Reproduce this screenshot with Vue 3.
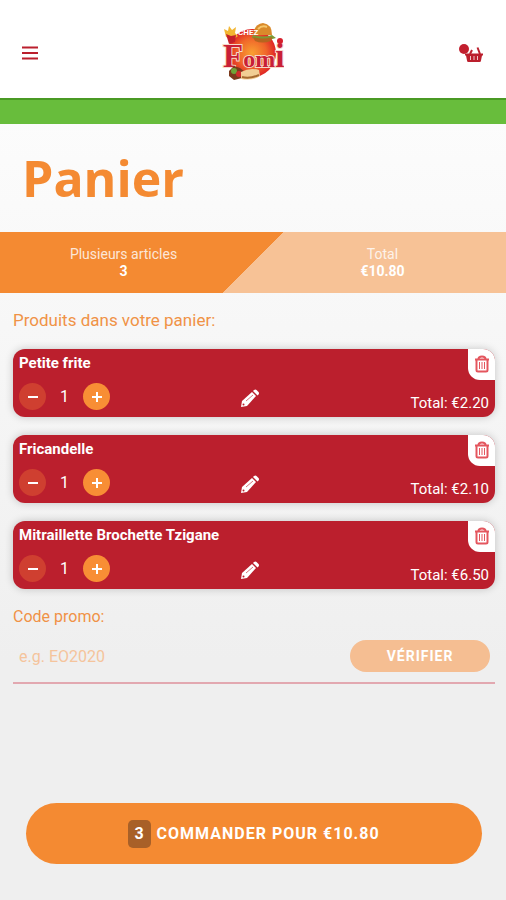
<script setup>
import { ref, computed } from 'vue'

const promoCode = ref('')

const products = ref([
  { name: 'Petite frite', price: 2.2, quantity: 1 },
  { name: 'Fricandelle', price: 2.1, quantity: 1 },
  { name: 'Mitraillette Brochette Tzigane', price: 6.5, quantity: 1 },
])

const articleCount = computed(() =>
  products.value.reduce((sum, product) => sum + product.quantity, 0)
)

const total = computed(() =>
  products.value.reduce((sum, product) => sum + product.quantity * product.price, 0)
)

const formatPrice = (value) => `€${value.toFixed(2)}`

const removeProduct = (index) => {
  products.value.splice(index, 1)
}
</script>

<template>
  <div class="cart-page">
    <header class="topbar">
      <button class="icon-button" aria-label="Menu">
        <svg width="16" height="14" viewBox="0 0 16 14">
          <path d="M0 1.5h16M0 7h16M0 12.5h16" stroke="#bb1f2d" stroke-width="2" />
        </svg>
      </button>

      <a href="#" class="logo" aria-label="Accueil">
        <svg width="62" height="60" viewBox="0 0 62 60">
          <defs>
            <radialGradient id="sun">
              <stop offset="0" stop-color="#f9a032" />
              <stop offset="0.6" stop-color="#f0662a" />
              <stop offset="1" stop-color="#df2525" />
            </radialGradient>
          </defs>
          <circle cx="30" cy="30" r="24" fill="url(#sun)" />
          <!-- fries -->
          <path d="M2 6l4 2 1-5 3 4 4-3-1 6 3 3-5 4-7-3z" fill="#f2b632" />
          <path d="M4 11l5 2 5-1-1 7-6 2z" fill="#c4202b" />
          <!-- burger -->
          <path d="M31 12q1-11 10-12 9 1 9 12z" fill="#d98a2b" />
          <path d="M36 6q4-4 9-2" fill="none" stroke="#f6c76b" stroke-width="2" />
          <path d="M31 12q10 3 19 0l4 3q-11 4-24 0z" fill="#7b9a35" />
          <path d="M31 14q10 3 19 0l-1 4q-9 3-16 0z" fill="#b5651f" />
          <text x="16" y="12" class="logo-small">CHEZ</text>
          <text x="1" y="44" class="logo-name">F<tspan class="logo-inner">om</tspan>i</text>
          <circle cx="58" cy="18" r="3" fill="#d6202c" />
          <!-- kebab and wrap -->
          <path d="M7 48l5-5 6 2 5 4-3 6-8 2-5-4z" fill="#7b3a1c" />
          <circle cx="12" cy="48" r="3" fill="#6fa437" />
          <circle cx="17" cy="51" r="3" fill="#d22b2b" />
          <path d="M19 49q9-5 18-2l1 6q-7 5-19 3z" fill="#f1cf94" />
          <path d="M20 54q8 2 17-2" fill="none" stroke="#a76c31" stroke-width="2" />
        </svg>
      </a>

      <button class="icon-button" aria-label="Panier">
        <svg width="26" height="20" viewBox="0 0 26 20">
          <circle cx="6" cy="6" r="5" fill="#c21f2e" />
          <path d="M7 10.500h18v2h-1l-1 5q0 1.500-1.500 1.500h-11q-1.500 0-1.500-1.500l-1-5h-1z" fill="#bb1f2d" />
          <path d="M12 11l2-4M22 11l-2.500-6.500" stroke="#bb1f2d" stroke-width="2" />
          <path d="M12.500 13v4M16 13v4M19.500 13v4" stroke="#f0c4c8" stroke-width="1" />
        </svg>
      </button>
    </header>
    <div class="green-band"></div>

    <main>
      <h1>Panier</h1>

      <section class="summary">
        <div class="summary-item articles">
          <span>Plusieurs articles</span>
          <strong>{{ articleCount }}</strong>
        </div>
        <div class="summary-item">
          <span>Total</span>
          <strong>{{ formatPrice(total) }}</strong>
        </div>
      </section>

      <section class="cart-content">
        <h2>Produits dans votre panier:</h2>

        <ul class="product-list">
          <li v-for="(product, index) in products" :key="product.name" class="product-card">
            <div class="product-info">
              <h3>{{ product.name }}</h3>
              <div class="quantity">
                <button
                  class="round-btn minus"
                  aria-label="Diminuer"
                  :disabled="product.quantity === 1"
                  @click="product.quantity--"
                >
                  <svg width="12" height="12" viewBox="0 0 12 12">
                    <path d="M1 6h10" stroke="currentColor" stroke-width="2" />
                  </svg>
                </button>
                <span>{{ product.quantity }}</span>
                <button class="round-btn" aria-label="Augmenter" @click="product.quantity++">
                  <svg width="12" height="12" viewBox="0 0 12 12">
                    <path d="M1 6h10M6 1v10" stroke="currentColor" stroke-width="2" />
                  </svg>
                </button>
              </div>
            </div>
            <button class="edit-btn" aria-label="Modifier">
              <svg width="20" height="20" viewBox="0 0 20 20">
                <path d="M2 13L12 4l4 4L7 18l-6 1z" fill="#fff" />
                <path d="M13 3l1-1q1.500-1 2.500 0l2 2q1 1 0 2.500l-1 1z" fill="#fff" />
                <path d="M6 13l7-6" stroke="#d8747c" stroke-width="1" />
                <circle cx="3.500" cy="16.500" r="1" fill="#bb1f2d" />
              </svg>
            </button>
            <div class="product-side">
              <button class="delete-btn" aria-label="Supprimer" @click="removeProduct(index)">
                <svg width="16" height="18" viewBox="0 0 16 18" fill="none" stroke="#e4565e">
                  <path d="M1 4.500h14" stroke-width="2" />
                  <path d="M4.500 4q0-2.500 3.500-2.500t3.500 2.500" stroke-width="2" />
                  <path d="M2.500 5v10q0 1.500 1.500 1.500h8q1.500 0 1.500-1.500V5" stroke-width="2" />
                  <path d="M5.500 7v7M8 7v7M10.500 7v7" stroke-width="1" />
                </svg>
              </button>
              <span class="product-total">
                Total: {{ formatPrice(product.price * product.quantity) }}
              </span>
            </div>
          </li>
        </ul>

        <form class="promo" @submit.prevent>
          <label for="promo-code">Code promo:</label>
          <div class="promo-row">
            <input id="promo-code" v-model="promoCode" type="text" placeholder="e.g. EO2020">
            <button class="verify-btn" type="submit">VÉRIFIER</button>
          </div>
        </form>
      </section>
    </main>

    <footer>
      <button class="order-btn">
        <span class="count-badge">{{ articleCount }}</span>
        COMMANDER POUR {{ formatPrice(total) }}
      </button>
    </footer>
  </div>
</template>

<style>
body {
  margin: 0;
  background: #efefef;
}
</style>

<style scoped>
.cart-page {
  display: flex;
  flex-direction: column;
  min-height: 100vh;
  box-sizing: border-box;
  background: linear-gradient(#fcfcfc 120px, #efefef 660px);
  font-family: Roboto, sans-serif;
}

button {
  border: none;
  padding: 0;
  background: transparent;
  font-family: inherit;
  cursor: pointer;
}

svg {
  display: block;
}

.topbar {
  display: flex;
  align-items: center;
  justify-content: space-between;
  height: 98px;
  padding: 8px 20px 0;
  box-sizing: border-box;
  background: #fff;
}

.icon-button {
  display: flex;
  align-items: center;
  width: 28px;
  height: 40px;
}

.icon-button:first-child {
  padding-left: 2px;
}

.logo-small {
  font: 700 8px Roboto, sans-serif;
  fill: #fff;
}

.logo-name {
  font: 700 33px "Liberation Serif", serif;
  fill: #c91f37;
  stroke: #f6d9c8;
  stroke-width: 2px;
  paint-order: stroke;
}

.logo-inner {
  font-size: 24px;
}

.green-band {
  height: 24px;
  border-top: 2px solid #4a9a24;
  background: #68bd3c;
}

h1 {
  margin: 0;
  padding: 18px 22px;
  color: #f48a32;
  font: 700 50px/72px "Open Sans", sans-serif;
}

.summary {
  display: flex;
  height: 61px;
  background: linear-gradient(135deg, #f48a32 50%, #f7c296 50%);
  color: #fff;
  font-size: 14px;
  line-height: 17px;
}

.summary-item {
  display: flex;
  flex: 1;
  flex-direction: column;
  align-items: center;
  justify-content: center;
}

.summary-item span {
  opacity: 0.8;
}

.summary-item.articles {
  padding-right: 6px;
}

.summary-item:last-child {
  padding-left: 6px;
}

.cart-content {
  padding: 15px 11px 0 13px;
}

h2,
.promo label {
  margin: 0;
  color: #f09246;
  font-size: 16px;
  font-weight: 400;
  line-height: 24px;
}

h2 {
  font-size: 17px;
}

.product-list {
  display: flex;
  flex-direction: column;
  gap: 18px;
  margin: 17px 0 0;
  padding: 0;
  list-style: none;
}

.product-card {
  display: grid;
  grid-template-columns: 47% auto 1fr;
  min-height: 68px;
  overflow: hidden;
  border-radius: 12px;
  background: #bb1f2d;
  box-shadow: 0 0 8px rgba(0, 0, 0, 0.2);
  color: #fff;
}

.product-info {
  padding: 6px 0 6px 6px;
}

h3 {
  margin: 0;
  font-size: 15px;
  line-height: 17px;
  white-space: nowrap;
}

.quantity {
  display: flex;
  align-items: center;
  gap: 14px;
  margin-top: 11px;
  font-size: 16px;
}

.round-btn {
  display: flex;
  align-items: center;
  justify-content: center;
  width: 27px;
  height: 27px;
  border-radius: 50%;
  background: #f88e35;
  color: #fff;
}

.round-btn.minus {
  background: #cf3f30;
}

.edit-btn {
  align-self: end;
  margin-bottom: 9px;
}

.product-side {
  display: flex;
  flex-direction: column;
  align-items: flex-end;
  justify-content: space-between;
}

.delete-btn {
  display: flex;
  align-items: center;
  justify-content: center;
  width: 27px;
  height: 31px;
  padding-bottom: 2px;
  border-bottom-left-radius: 12px;
  background: #fff;
}

.product-total {
  padding: 0 6px 5px 0;
  font-size: 15px;
  line-height: 17px;
}

.promo {
  margin-top: 16px;
}

.promo-row {
  display: flex;
  align-items: center;
  margin-top: 11px;
  padding: 0 5px 10px 0;
  border-bottom: 2px solid #e2a8b0;
}

.promo-row input {
  flex: 1;
  min-width: 0;
  border: none;
  padding: 6px;
  outline: none;
  background: transparent;
  color: #f09246;
  font: 16px Roboto, sans-serif;
}

.promo-row input::placeholder {
  color: #f5c49c;
  opacity: 1;
}

.verify-btn {
  width: 140px;
  height: 32px;
  border-radius: 16px;
  background: #f5be92;
  color: #fff;
  font-size: 14px;
  font-weight: 700;
  letter-spacing: 1px;
}

footer {
  margin-top: auto;
  padding: 24px 24px 36px 26px;
}

.order-btn {
  display: flex;
  align-items: center;
  justify-content: center;
  gap: 6px;
  width: 100%;
  height: 61px;
  border-radius: 31px;
  background: #f48a32;
  color: #fff;
  font-size: 16px;
  font-weight: 700;
  letter-spacing: 1px;
}

.count-badge {
  padding: 4px 6px;
  border-radius: 5px;
  background: #a86028;
  line-height: 20px;
}
</style>
